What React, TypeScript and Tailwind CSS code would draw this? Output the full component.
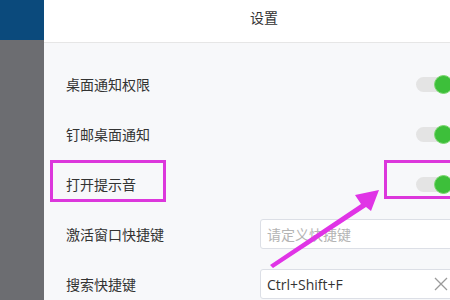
import React from 'react';

const font = { fontFamily: '"Noto Sans CJK SC", "Noto Sans", sans-serif' };

function Toggle() {
  return (
    <div className="relative h-[15px] w-[36px] rounded-full bg-[#e4e4e4]">
      <div className="absolute right-[-1px] top-[-2px] h-[19px] w-[19px] rounded-full border border-[#7ad66f] bg-[#3dbf3a]" />
    </div>
  );
}

function Row({ label, children }: { label: string; children: React.ReactNode }) {
  return (
    <div className="flex h-[50px] shrink-0 items-center">
      <div className="w-[194px] text-[14px] text-[#333]">{label}</div>
      {children}
    </div>
  );
}

export default function App() {
  return (
    <div className="relative flex h-[300px] w-[450px] overflow-hidden bg-[#f7f8fa]" style={font}>
      <div className="flex w-[44px] shrink-0 flex-col">
        <div className="h-[40px] bg-[#0b4a7c]" />
        <div className="flex-1 bg-[#6c6d71]" />
      </div>

      <div className="flex w-[440px] shrink-0 flex-col">
        <div className="flex h-[43px] shrink-0 justify-center border-b border-[#e6e6e6] bg-white pt-[7px] text-[14px] leading-[20px] text-[#333]">
          设置
        </div>
        <div className="flex flex-col pl-[22px] pt-[16px]">
          <Row label="桌面通知权限">
            <div className="ml-[156px]"><Toggle /></div>
          </Row>
          <Row label="钉邮桌面通知">
            <div className="ml-[156px]"><Toggle /></div>
          </Row>
          <Row label="打开提示音">
            <div className="ml-[156px]"><Toggle /></div>
          </Row>
          <Row label="激活窗口快捷键">
            <div className="flex h-[30px] w-[220px] items-center rounded-[3px] border border-[#dcdfe6] bg-white px-[6px] text-[14px] text-[#b4b4b4]">
              请定义快捷键
            </div>
          </Row>
          <Row label="搜索快捷键">
            <div className="flex h-[30px] w-[220px] items-center rounded-[3px] border border-[#dcdfe6] bg-white px-[6px] text-[14px] text-[#333]">
              <span className="flex-1" style={{ fontFamily: '"Open Sans", "Noto Sans", sans-serif' }}>Ctrl+Shift+F</span>
              <svg width="16" height="16" viewBox="0 0 16 16" className="mr-[24px]">
                <path d="M2 2 L14 14 M14 2 L2 14" stroke="#9a9a9a" strokeWidth="1.3" />
              </svg>
            </div>
          </Row>
        </div>
      </div>

      {/* annotation boxes */}
      <div className="absolute left-[50px] top-[160px] h-[42px] w-[116px] border-[3px] border-[#dc37dc]" />
      <div className="absolute left-[384px] top-[160px] h-[39px] w-[80px] border-[3px] border-[#dc37dc]" />

      {/* annotation arrow */}
      <svg className="absolute left-0 top-0" width="450" height="300" viewBox="0 0 450 300">
        <path d="M270 265 L361 204 L355 195 L379 190 L371 211 L366 207 L273 268 Z" fill="#e034e6" />
      </svg>
    </div>
  );
}
